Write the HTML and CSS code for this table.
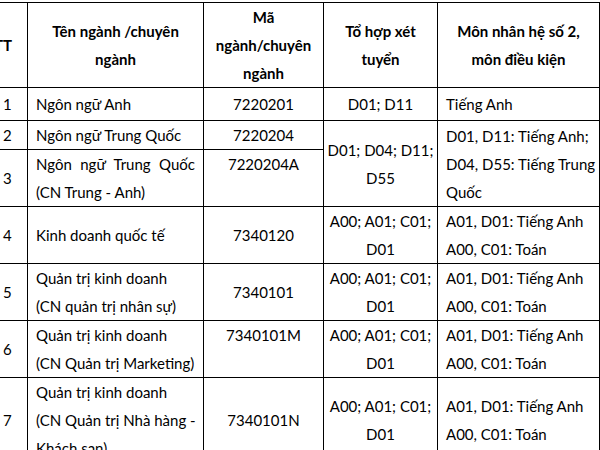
FILE: index.html
```html
<!DOCTYPE html>
<html lang="vi">
<head>
<meta charset="utf-8">
<link rel="stylesheet" href="styles.css">
</head>
<body>
<table class="grid">
  <colgroup>
    <col class="c-tt"><col class="c-name"><col class="c-code"><col class="c-combo"><col class="c-subj">
  </colgroup>
  <thead>
    <tr class="head">
      <th>TT</th>
      <th>Tên ngành /chuyên<br>ngành</th>
      <th>Mã<br>ngành/chuyên<br>ngành</th>
      <th>Tổ hợp xét<br>tuyển</th>
      <th>Môn nhân hệ số 2,<br>môn điều kiện</th>
    </tr>
  </thead>
  <tbody>
    <tr class="r1">
      <td class="num">1</td>
      <td>Ngôn ngữ Anh</td>
      <td class="center">7220201</td>
      <td class="center">D01; D11</td>
      <td>Tiếng Anh</td>
    </tr>
    <tr class="r2">
      <td class="num">2</td>
      <td>Ngôn ngữ Trung Quốc</td>
      <td class="center">7220204</td>
      <td class="center" rowspan="2">D01; D04; D11;<br>D55</td>
      <td rowspan="2">D01, D11: Tiếng Anh;<br>D04, D55: Tiếng Trung<br>Quốc</td>
    </tr>
    <tr>
      <td class="num">3</td>
      <td><span class="just">Ngôn ngữ Trung Quốc</span>(CN Trung - Anh)</td>
      <td class="center top">7220204A</td>
    </tr>
    <tr>
      <td class="num">4</td>
      <td>Kinh doanh quốc tế</td>
      <td class="center">7340120</td>
      <td class="center">A00; A01; C01;<br>D01</td>
      <td>A01, D01: Tiếng Anh<br>A00, C01: Toán</td>
    </tr>
    <tr>
      <td class="num">5</td>
      <td>Quản trị kinh doanh<br>(CN quản trị nhân sự)</td>
      <td class="center">7340101</td>
      <td class="center">A00; A01; C01;<br>D01</td>
      <td>A01, D01: Tiếng Anh<br>A00, C01: Toán</td>
    </tr>
    <tr>
      <td class="num">6</td>
      <td>Quản trị kinh doanh<br>(CN Quản trị Marketing)</td>
      <td class="center top">7340101M</td>
      <td class="center">A00; A01; C01;<br>D01</td>
      <td>A01, D01: Tiếng Anh<br>A00, C01: Toán</td>
    </tr>
    <tr>
      <td class="num">7</td>
      <td>Quản trị kinh doanh<br>(CN Quản trị Nhà hàng -<br>Khách sạn)</td>
      <td class="center top second">7340101N</td>
      <td class="center">A00; A01; C01;<br>D01</td>
      <td>A01, D01: Tiếng Anh<br>A00, C01: Toán</td>
    </tr>
  </tbody>
</table>
</body>
</html>
```
FILE: styles.css
```css
html, body {
  margin: 0;
  padding: 0;
  background: #ffffff;
}

body {
  overflow: hidden;
  font-family: Lato, "Noto Sans", sans-serif;
  font-size: 15px;
  color: #000000;
}

.grid {
  border-collapse: collapse;
  table-layout: fixed;
  width: 621px;
  margin: 2px 0 0 -22px;
  line-height: 28px;
}

.c-tt { width: 49px; }
.c-name { width: 176px; }
.c-code { width: 120px; }
.c-combo { width: 114px; }
.c-subj { width: 162px; }

.grid th,
.grid td {
  border: 1px solid #000000;
  padding: 0 8px;
  vertical-align: middle;
  white-space: nowrap;
}

.grid th {
  font-weight: 700;
  text-align: center;
}

.grid td {
  text-align: left;
}

.grid td.num {
  padding-left: 24px;
}

.grid td.center {
  text-align: center;
  padding: 0 2px;
}

.grid td.top {
  vertical-align: top;
}

.grid td.second {
  padding-top: 28px;
}

.r1 td {
  height: 32px;
}

.just {
  display: block;
  text-align: justify;
  text-align-last: justify;
}
```
